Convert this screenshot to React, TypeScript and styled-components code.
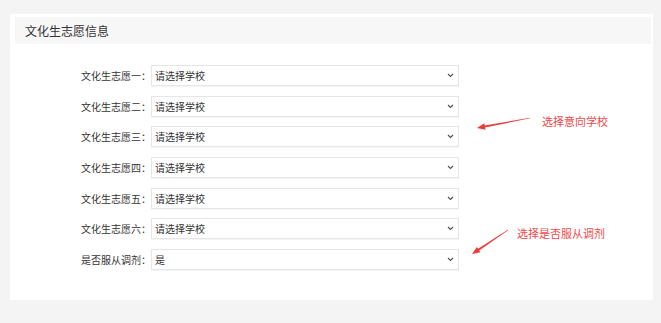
import React from 'react';
import styled, {createGlobalStyle} from 'styled-components';

const GlobalStyle = createGlobalStyle`
	html, body {
		margin: 0;
		padding: 0;
		background: #f4f4f4;
	}
	body {
		font-family: "Noto Sans CJK SC", "Noto Sans", sans-serif;
		color: #333;
	}
`;

const Page = styled.div`
	width: 661px;
	height: 323px;
	padding: 14px 0 0 10px;
	box-sizing: border-box;
`;

const Card = styled.div`
	position: relative;
	width: 643px;
	box-sizing: border-box;
	background: #fff;
	padding: 3px 2px 30px 5px;
`;

const Header = styled.div`
	height: 27px;
	background: #f7f7f7;
	display: flex;
	align-items: center;
	padding-left: 10px;
	font-size: 12px;
	color: #333;
`;

const Form = styled.div`
	margin-top: 21px;
	display: grid;
	grid-template-columns: 136px 308px;
	grid-auto-rows: 21px;
	row-gap: 9.67px;
	align-items: center;
`;

const Label = styled.div`
	text-align: right;
	font-size: 10px;
	line-height: 21px;
	color: #333;
	white-space: nowrap;
`;

const SelectBox = styled.div`
	height: 21px;
	box-sizing: border-box;
	border: 1px solid #e6e6e6;
	box-shadow: 0 1px 1px rgba(0, 0, 0, 0.04);
	display: flex;
	align-items: center;
	justify-content: space-between;
	padding: 0 4px 0 3px;
	font-size: 10px;
	color: #333;
	background: #fff;
`;

const Chevron = styled.svg`
	width: 7px;
	height: 5px;
	flex: none;
`;

const Note = styled.div<{$x: number; $y: number}>`
	position: absolute;
	left: ${(p) => p.$x}px;
	top: ${(p) => p.$y}px;
	font-size: 11px;
	line-height: 14px;
	color: #f04848;
	white-space: nowrap;
`;

const Overlay = styled.svg`
	position: absolute;
	left: 0;
	top: 0;
	width: 643px;
	height: 286px;
	pointer-events: none;
	overflow: visible;
`;

const rows = [
	{label: '文化生志愿一：', value: '请选择学校'},
	{label: '文化生志愿二：', value: '请选择学校'},
	{label: '文化生志愿三：', value: '请选择学校'},
	{label: '文化生志愿四：', value: '请选择学校'},
	{label: '文化生志愿五：', value: '请选择学校'},
	{label: '文化生志愿六：', value: '请选择学校'},
	{label: '是否服从调剂：', value: '是'},
];

const Arrow = ({x1, y1, x2, y2}: {x1: number; y1: number; x2: number; y2: number}) => {
	const len = Math.hypot(x2 - x1, y2 - y1);
	const angle = (Math.atan2(y2 - y1, x2 - x1) * 180) / Math.PI;
	const h = 8;
	return (
		<g transform={`translate(${x1} ${y1}) rotate(${angle})`}>
			<polygon
				points={`0,-0.3 ${len - h},-1 ${len - h},-3.2 ${len},0 ${len - h},3.2 ${len - h},1 0,0.3`}
				fill="#ee3a3a"
			/>
		</g>
	);
};

const App = () => (
	<>
		<GlobalStyle />
		<Page>
			<Card>
				<Header>文化生志愿信息</Header>
				<Form>
					{rows.map((row) => (
						<React.Fragment key={row.label}>
							<Label>{row.label}</Label>
							<SelectBox>
								<span>{row.value}</span>
								<Chevron viewBox="0 0 7 5">
									<path d="M1 1 L3.5 3.5 L6 1" fill="none" stroke="#555" strokeWidth="1.2" />
								</Chevron>
							</SelectBox>
						</React.Fragment>
					))}
				</Form>
				<Overlay>
					<Arrow x1={520} y1={104} x2={467} y2={114} />
					<Arrow x1={498} y1={216} x2={462} y2={240} />
				</Overlay>
				<Note $x={532} $y={100}>选择意向学校</Note>
				<Note $x={507} $y={212}>选择是否服从调剂</Note>
			</Card>
		</Page>
	</>
);

export default App;
